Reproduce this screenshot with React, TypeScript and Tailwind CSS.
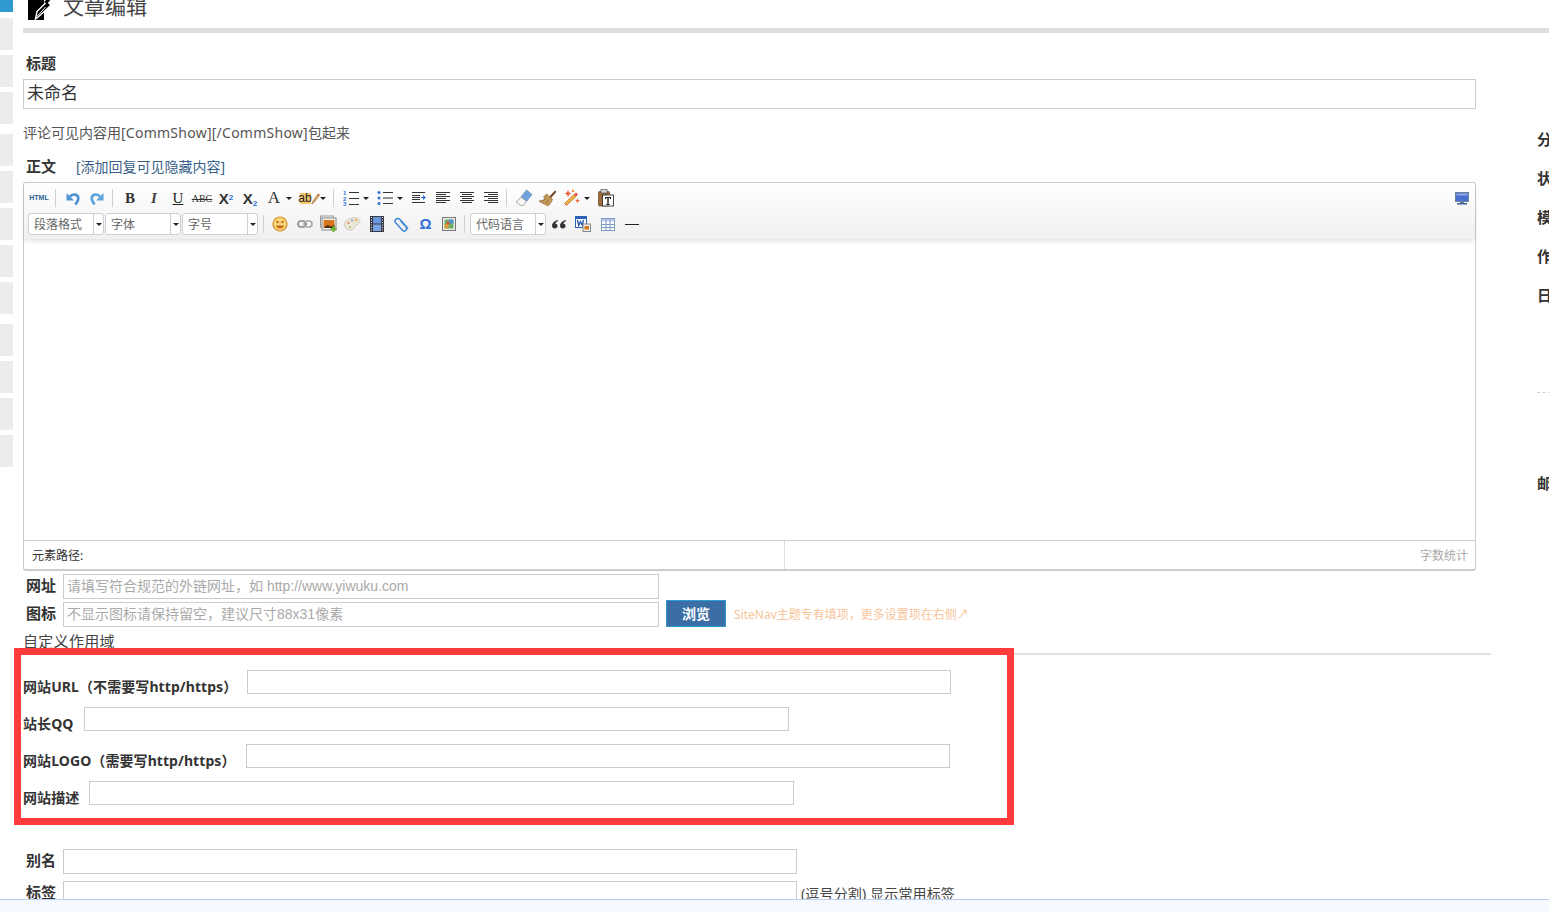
import React from 'react';

const sans = "font-['Noto_Sans','Noto_Sans_CJK_SC',sans-serif]";

const Arrow = ({ className = '' }: { className?: string }) => (
  <span className={`block w-0 h-0 border-x-[3px] border-t-[3px] border-x-transparent border-t-[#222] ${className}`} />
);

const Tool = ({ w = 'w-[24px]', children }: { w?: string; children: React.ReactNode }) => (
  <div className={`${w} h-full shrink-0 flex items-center justify-center`}>{children}</div>
);

const Sep = ({ w, pl }: { w: string; pl: string }) => (
  <div className={`${w} ${pl} shrink-0 h-full flex items-center`}>
    <div className="w-px h-[18px] bg-[#d0d0d0]" />
  </div>
);

const Drop = ({ w = 'w-[6px]', ml = '' }: { w?: string; ml?: string }) => (
  <div className={`${w} ${ml} shrink-0 flex justify-center`}>
    <Arrow />
  </div>
);

const Combo = ({ label, w, box }: { label: string; w: string; box: string }) => (
  <div className={`${w} shrink-0 h-[22px] flex bg-white border border-[#cfcfcf] rounded-[3px]`}>
    <div className={`${box} border-r border-[#cfcfcf] pl-[5px] text-[12px] leading-[22px] text-[#666]`}>{label}</div>
    <div className="flex-1 flex items-center justify-center">
      <Arrow />
    </div>
  </div>
);

const Lines = ({ rows }: { rows: [number, number][] }) => (
  <svg width="16" height="16" viewBox="0 0 16 16">
    {rows.map(([x, w], i) => (
      <rect key={i} x={x} y={2 + i * 2} width={w} height="1" fill="#333" />
    ))}
  </svg>
);

const UndoIcon = ({ flip }: { flip?: boolean }) => (
  <svg width="16" height="16" viewBox="0 0 16 16">
    <g transform={flip ? 'translate(16,0) scale(-1,1)' : undefined}>
      <path d="M5 6.500C8 3.500 13 4 13.300 8c.2 2.500-1.500 4.700-3 6.500" fill="none" stroke={flip ? '#5ba4dc' : '#4f93d2'} strokeWidth="2.600" />
      <path d="M1.500 3v7.500h7.500z" fill={flip ? '#5ba4dc' : '#4f93d2'} />
    </g>
  </svg>
);

const OlIcon = () => (
  <svg width="18" height="17" viewBox="0 0 18 17">
    <text x="1" y="5" fontSize="6" fontWeight="700" fill="#2f73d8" fontFamily="Liberation Sans">1</text>
    <text x="1" y="10.500" fontSize="6" fontWeight="700" fill="#2f73d8" fontFamily="Liberation Sans">2</text>
    <text x="1" y="16" fontSize="6" fontWeight="700" fill="#2f73d8" fontFamily="Liberation Sans">3</text>
    <rect x="7" y="2" width="10" height="1" fill="#333" />
    <rect x="7" y="8" width="10" height="1" fill="#333" />
    <rect x="7" y="14" width="10" height="1" fill="#333" />
  </svg>
);

const UlIcon = () => (
  <svg width="18" height="16" viewBox="0 0 18 16">
    <circle cx="3" cy="2.500" r="1.500" fill="#2f73d8" />
    <circle cx="3" cy="8" r="1.500" fill="#2f73d8" />
    <circle cx="3" cy="13.500" r="1.500" fill="#2f73d8" />
    <rect x="7" y="2" width="10" height="1" fill="#333" />
    <rect x="7" y="7.500" width="10" height="1" fill="#333" />
    <rect x="7" y="13" width="10" height="1" fill="#333" />
  </svg>
);

const IndentIcon = () => (
  <svg width="16" height="16" viewBox="0 0 16 16">
    <rect x="1" y="2" width="13" height="1" fill="#333" />
    <rect x="1" y="5" width="8" height="1" fill="#333" />
    <rect x="1" y="7" width="8" height="1" fill="#333" />
    <rect x="1" y="9" width="8" height="1" fill="#333" />
    <rect x="1" y="12" width="13" height="1" fill="#333" />
    <path d="M10 7h2V5l3 2.500-3 2.500V8h-2z" fill="#2f73d8" />
  </svg>
);

const EraserIcon = () => (
  <svg width="18" height="18" viewBox="0 0 18 18">
    <path d="M11.500 1l5.500 4.500-5.500 7-5.500-4.500z" fill="#6fa4dc" stroke="#6b8db5" strokeWidth=".8" />
    <path d="M6 8l5.500 4.500-3 4H5.500L1 13z" fill="#f6f6f6" stroke="#999" strokeWidth=".8" />
  </svg>
);

const BrushIcon = () => (
  <svg width="20" height="18" viewBox="0 0 20 18">
    <path d="M11 8l6-6.500 1.500 1.300L13 9z" fill="#6e4420" />
    <path d="M8.500 5l6 5.500c-1 2.500-2.500 4.500-4.500 6.500-1-1-6-2.500-9-5 3-.2 4.500-.8 6-2.500L5.500 8z" fill="#c79a5a" stroke="#8a5f2c" strokeWidth=".7" />
    <path d="M5 12l3.500-3M8 14l3-3.500" stroke="#8a5f2c" strokeWidth=".8" />
  </svg>
);

const MagicIcon = () => (
  <svg width="18" height="18" viewBox="0 0 18 18">
    <path d="M3.500 16.500l-2-2 9.500-9 2 2z" fill="#f2b04a" stroke="#b36b1c" strokeWidth=".7" />
    <path d="M11 5.500l2-2 2 2-2 2z" fill="#e0503a" />
    <path d="M5 1l1 2.600 2.500 1-2.500 1L5 8.200 4 5.600l-2.500-1 2.500-1z" fill="#ee5b2f" />
    <path d="M14.500 9.500l.7 1.600 1.600.7-1.600.7-.7 1.600-.7-1.600-1.600-.7 1.600-.7z" fill="#ee5b2f" />
    <circle cx="10" cy="2" r="1.200" fill="#f08a3c" />
  </svg>
);

const PasteIcon = () => (
  <svg width="16" height="18" viewBox="0 0 16 18">
    <rect x=".5" y="2.500" width="11" height="14.500" rx="1" fill="#9a6a3c" stroke="#6a4522" strokeWidth=".7" />
    <rect x="3" y=".5" width="6" height="3.500" fill="#d8d8d8" stroke="#555" strokeWidth=".7" />
    <rect x="4.500" y="6" width="11" height="11" fill="#fff" stroke="#333" strokeWidth=".9" />
    <path d="M7 8h6v2h-1V9h-1.300v6h1v1H8.300v-1h1V9H8v1H7z" fill="#222" />
  </svg>
);

const ScreenIcon = () => (
  <svg width="14" height="13" viewBox="0 0 14 13">
    <rect x=".5" y=".5" width="13" height="9" fill="#4a70d0" stroke="#6a809c" />
    <rect x="1.500" y="1.500" width="11" height="2" fill="#8fa8e8" />
    <rect x="5" y="10" width="4" height="1" fill="#6a809c" />
    <rect x="2" y="11" width="10" height="1.500" fill="#3f5f90" />
  </svg>
);

const SmileIcon = () => (
  <svg width="16" height="16" viewBox="0 0 16 16">
    <circle cx="8" cy="8" r="7" fill="#fbd77a" stroke="#d98a2b" strokeWidth="1.200" />
    <circle cx="5.500" cy="6" r="1.200" fill="#c9691c" />
    <circle cx="10.500" cy="6" r="1.200" fill="#c9691c" />
    <path d="M4 9.500h8c-.5 2-2 3-4 3s-3.500-1-4-3z" fill="#c9691c" />
  </svg>
);

const LinkIcon = () => (
  <svg width="16" height="10" viewBox="0 0 16 10">
    <rect x="1" y="2" width="8" height="6" rx="3" fill="none" stroke="#8a8a8a" strokeWidth="1.600" />
    <rect x="7" y="2" width="8" height="6" rx="3" fill="none" stroke="#a8a8a8" strokeWidth="1.600" />
  </svg>
);

const ImageIcon = () => (
  <svg width="18" height="18" viewBox="0 0 18 18">
    <rect x=".5" y="1" width="13" height="11" fill="#eee" stroke="#999" />
    <rect x="2" y="3" width="14" height="12" fill="#f4f4f4" stroke="#888" />
    <rect x="3.500" y="5" width="11" height="8" fill="#d9741c" />
    <path d="M3.500 13l4-3 3 1.500 4-1.500v3z" fill="#4a2a10" />
    <path d="M12.500 11h2v2h2v2h-2v2h-2v-2h-2v-2h2z" fill="#6ab82f" />
  </svg>
);

const PaletteIcon = () => (
  <svg width="18" height="16" viewBox="0 0 18 16">
    <path d="M9 2c4.500-1.500 8.500.5 8 3.500-.4 2.500-4 3-5 5-.8 1.800-2.500 4-5.500 3.500C3 13.500 1 11 1.500 8 2 5 5 3.200 9 2z" fill="#ece6d6" stroke="#bdb6a2" strokeWidth=".6" />
    <circle cx="13" cy="4" r="1.100" fill="#e0a040" />
    <circle cx="9" cy="4.500" r="1.100" fill="#7aa6d8" />
    <circle cx="5.500" cy="7" r="1.100" fill="#d87a6a" />
    <circle cx="7" cy="11" r="1" fill="#9ab86a" />
  </svg>
);

const FilmIcon = () => (
  <svg width="14" height="16" viewBox="0 0 14 16">
    <rect width="14" height="16" fill="#3a3a44" />
    <rect x="3" y="1" width="8" height="6.500" fill="#6a96dc" />
    <rect x="3" y="8.500" width="8" height="6.500" fill="#7aa4e4" />
    <path d="M1 1.500h1M1 4h1M1 6.500h1M1 9h1M1 11.500h1M1 14h1M12 1.500h1M12 4h1M12 6.500h1M12 9h1M12 11.500h1M12 14h1" stroke="#ddd" strokeWidth="1" />
  </svg>
);

const ClipIcon = () => (
  <svg width="16" height="16" viewBox="0 0 16 16">
    <path d="M14 12.500L6 3.500C4.800 2 2.800 2.200 1.800 3.200.8 4.200.8 6 2 7.200l6.500 7c1 1 2.600 1 3.500.1 1-1 .9-2.500 0-3.500L6.500 5" fill="none" stroke="#3f86d8" strokeWidth="1.500" />
  </svg>
);

const MapIcon = () => (
  <svg width="14" height="14" viewBox="0 0 14 14">
    <rect x=".5" y=".5" width="13" height="13" fill="#eee" stroke="#777" />
    <rect x="2.500" y="2.500" width="9" height="9" fill="#6fae5f" />
    <rect x="7" y="2.500" width="4.500" height="4" fill="#5b8fd8" />
    <rect x="2.500" y="7" width="4" height="4.500" fill="#d8a040" />
    <circle cx="6" cy="6" r="1.500" fill="#d8503a" />
  </svg>
);

const QuoteIcon = () => (
  <svg width="16" height="10" viewBox="0 0 16 10">
    <path d="M7 1C4 1.500 1 4 1 6.500 1 8.400 2.200 9.500 3.800 9.500S6.500 8.300 6.500 7c0-1.400-1-2.400-2.300-2.400C4.700 3.400 5.800 2.400 7 2z" fill="#333" />
    <path d="M15 1c-3 .5-6 3-6 5.500 0 1.900 1.200 3 2.800 3s2.700-1.200 2.700-2.500c0-1.400-1-2.400-2.300-2.400.5-1.200 1.600-2.200 2.800-2.600z" fill="#333" />
  </svg>
);

const WordIcon = () => (
  <svg width="16" height="16" viewBox="0 0 16 16">
    <rect x=".5" y=".5" width="11" height="11" fill="#fff" stroke="#2a62b8" />
    <rect x="1" y="1" width="10" height="2" fill="#2a62b8" />
    <path d="M2.500 4l1.200 5.500L5.500 5.500l1.800 4L8.500 4" fill="none" stroke="#1f55b0" strokeWidth="1.300" />
    <rect x="8" y="8" width="7.500" height="7.500" fill="#eee" stroke="#888" />
    <rect x="9.500" y="10" width="4.500" height="3.500" fill="#d9741c" />
  </svg>
);

const TableIcon = () => (
  <svg width="14" height="13" viewBox="0 0 14 13">
    <rect x=".5" y=".5" width="13" height="12" fill="#fff" stroke="#7f9cc8" />
    <rect x="1" y="1" width="12" height="2.500" fill="#b9cdea" />
    <path d="M1 6.500h12M1 9.500h12M5 1v11M9 1v11" stroke="#7f9cc8" strokeWidth="1" />
  </svg>
);

const PenTitleIcon = () => (
  <svg width="24" height="26" viewBox="0 0 24 26" className="shrink-0">
    <rect x="0" y="0" width="16" height="26" fill="#000" />
    <path d="M7.500 25l1.500-7.500L19 7.500l4 3.500L12.500 21z" fill="#000" stroke="#fff" strokeWidth="1.400" />
    <path d="M16 8l6-6 2 2-5 6z" fill="#000" />
    <path d="M9.500 22l8-9" stroke="#fff" strokeWidth="1" />
  </svg>
);

const FormInput = ({ w, h = 'h-[25px]', placeholder }: { w: string; h?: string; placeholder?: string }) => (
  <input
    placeholder={placeholder}
    className={`${w} ${h} shrink-0 bg-white border border-[#ccc] pl-[3px] pb-[2px] text-[14px] font-['Liberation_Sans','Noto_Sans_CJK_SC',sans-serif] placeholder:text-[#aaa] outline-none`}
  />
);

const Label = ({ children }: { children: React.ReactNode }) => (
  <div className="w-[40px] pl-[3px] shrink-0 text-[15px] leading-[23px] font-bold text-[#333]">{children}</div>
);

const customRows = [
  { label: '网站URL（不需要写http/https）', w: 'w-[224px]', input: 'w-[704px]' },
  { label: '站长QQ', w: 'w-[61px]', input: 'w-[705px]' },
  { label: '网站LOGO（需要写http/https）', w: 'w-[223px]', input: 'w-[704px]' },
  { label: '网站描述', w: 'w-[66px]', input: 'w-[705px]' },
];

const railGroups = [
  ['mt-[6px]', 'mt-[5px]', 'mt-[5px]'],
  ['mt-[10px]', 'mt-[5px]', 'mt-[5px]', 'mt-[5px]', 'mt-[5px]'],
  ['mt-[10px]', 'mt-[5px]', 'mt-[5px]', 'mt-[5px]'],
];

const sideLabels = ['分类', '状态', '模板', '作者', '日期'];

const Toolbar = () => (
  <div className="h-[56px] pt-[2px] bg-linear-to-b from-white to-[#f0f0f0] shadow-[0_2px_4px_rgba(0,0,0,0.12)] rounded-t-[3px] relative">
    <div className="h-[26px] flex items-center pl-[3px] pr-[1px]">
      <Tool>
        <span className="text-[7px] font-bold text-[#2a5f93] font-['Liberation_Sans',sans-serif]">HTML</span>
      </Tool>
      <Sep w="w-[10px]" pl="pl-[4px]" />
      <Tool><UndoIcon /></Tool>
      <Tool><UndoIcon flip /></Tool>
      <Sep w="w-[9px]" pl="pl-[3px]" />
      <Tool><span className="font-['Liberation_Serif',serif] font-bold text-[15px] text-[#333]">B</span></Tool>
      <Tool><span className="font-['Liberation_Serif',serif] italic font-bold text-[15px] text-[#444]">I</span></Tool>
      <Tool><span className="font-['Liberation_Serif',serif] underline text-[15px] text-[#222]">U</span></Tool>
      <Tool><span className="font-['Liberation_Serif',serif] line-through text-[10px] text-[#333]">ABC</span></Tool>
      <Tool>
        <span className="font-['Liberation_Sans',sans-serif] font-bold text-[15px] text-[#333] leading-none">X<sup className="text-[8px] text-[#2f73d8]">2</sup></span>
      </Tool>
      <Tool>
        <span className="font-['Liberation_Sans',sans-serif] font-bold text-[15px] text-[#333] leading-none">X<sub className="text-[8px] text-[#2f73d8]">2</sub></span>
      </Tool>
      <Tool><span className="font-['Liberation_Serif',serif] text-[17px] text-[#333]">A</span></Tool>
      <Drop />
      <Tool w="w-[24px] ml-[4px]">
        <span className="relative flex items-center justify-center bg-[#f6c46c] h-[11px] w-[11px] -ml-[6px] text-[12px] leading-none font-['Liberation_Sans',sans-serif] text-[#222]">
          ab
          <svg width="9" height="12" viewBox="0 0 9 12" className="absolute left-[11px] top-0">
            <path d="M1 11l1-3 5-7 1.500 1-5 7z" fill="#e8b35a" stroke="#8a5a2a" strokeWidth=".6" />
            <path d="M6.500 1.500L7.500.5l1 1-1 1z" fill="#e0503a" />
          </svg>
        </span>
      </Tool>
      <Drop />
      <Sep w="w-[13px]" pl="pl-[7px]" />
      <Tool><OlIcon /></Tool>
      <Drop />
      <Tool w="w-[24px] ml-[4px]"><UlIcon /></Tool>
      <Drop />
      <Tool w="w-[24px] ml-[4px]"><IndentIcon /></Tool>
      <Tool><Lines rows={[[1, 14], [1, 10], [1, 14], [1, 10], [1, 14], [1, 10]]} /></Tool>
      <Tool><Lines rows={[[1, 14], [3, 10], [1, 14], [3, 10], [1, 14], [3, 10]]} /></Tool>
      <Tool><Lines rows={[[1, 14], [5, 10], [1, 14], [5, 10], [1, 14], [5, 10]]} /></Tool>
      <Sep w="w-[9px]" pl="pl-[3px]" />
      <Tool><EraserIcon /></Tool>
      <Tool><BrushIcon /></Tool>
      <Tool><MagicIcon /></Tool>
      <Drop />
      <Tool w="w-[24px] ml-[4px]"><PasteIcon /></Tool>
      <div className="ml-auto h-full">
        <Tool><ScreenIcon /></Tool>
      </div>
    </div>
    <div className="h-[22px] mt-[2px] flex items-center pl-[4px]">
      <Combo label="段落格式" w="w-[76px]" box="w-[65px]" />
      <Combo label="字体" w="w-[76px] ml-[1px]" box="w-[65px]" />
      <Combo label="字号" w="w-[76px] ml-[1px]" box="w-[65px]" />
      <Sep w="w-[10px]" pl="pl-[5px]" />
      <Tool><SmileIcon /></Tool>
      <Tool w="w-[25px]"><LinkIcon /></Tool>
      <Tool w="w-[23px]"><ImageIcon /></Tool>
      <Tool><PaletteIcon /></Tool>
      <Tool w="w-[25px]"><FilmIcon /></Tool>
      <Tool w="w-[25px]"><ClipIcon /></Tool>
      <Tool w="w-[23px]">
        <span className="font-['Liberation_Sans',sans-serif] text-[15px] font-bold text-[#2f73d8]">Ω</span>
      </Tool>
      <Tool><MapIcon /></Tool>
      <Sep w="w-[9px]" pl="pl-[3px]" />
      <Combo label="代码语言" w="w-[76px]" box="w-[65px]" />
      <Tool w="w-[25px]"><QuoteIcon /></Tool>
      <Tool><WordIcon /></Tool>
      <Tool w="w-[25px]"><TableIcon /></Tool>
      <Tool><div className="w-[14px] h-[1px] bg-[#222]" /></Tool>
    </div>
  </div>
);

const Editor = () => (
  <div className="mt-[5px] w-[1453px] h-[389px] flex flex-col border border-[#ccc] border-b-2 rounded-[3px]">
    <Toolbar />
    <div className="flex-1 bg-white" />
    <div className="h-[29px] flex border-t border-[#ccc] text-[12px] leading-[30px]">
      <div className="w-[761px] pl-[8px] border-r border-[#ddd] text-[#333]">元素路径:</div>
      <div className="flex-1 text-right pr-[7px] text-[#aaa]">字数统计</div>
    </div>
  </div>
);

export default function App() {
  return (
    <div className={`relative w-full h-[912px] overflow-hidden bg-white flex text-[#333] ${sans}`}>
      <div className="w-[13px] shrink-0 flex flex-col">
        <div className="h-[12px] bg-[#2e9ad0]" />
        {railGroups.map((g, i) => g.map((m, j) => <div key={`${i}-${j}`} className={`h-[32px] bg-[#ececec] ${m}`} />))}
      </div>

      <div className="ml-[10px] flex-1 min-w-0 flex flex-col">
        <div className="h-[33px] border-b-[5px] border-[#dddddd] shrink-0">
          <div className="flex items-center -mt-[8px] h-[30px] pl-[5px]">
            <PenTitleIcon />
            <span className="ml-[11px] text-[21px] text-[#444]">文章编辑</span>
          </div>
        </div>

        <div className="flex">
          <div className="w-[1468px] shrink-0">
            <div className="mt-[20px] pl-[3px] text-[15px] leading-[20px] font-bold">标题</div>
            <input
              defaultValue="未命名"
              className="mt-[6px] block w-[1453px] h-[30px] border border-[#ccc] pl-[3px] pb-[5px] text-[17px] text-[#333] outline-none"
            />
            <div className="mt-[14px] text-[14px] leading-[20px] text-[#555]">
              评论可见内容用<span className="tracking-[0.25px]">[CommShow][/CommShow]</span>包起来
            </div>
            <div className="mt-[14px] h-[20px] flex items-center pl-[3px] -translate-y-px">
              <span className="w-[50px] text-[15px] font-bold">正文</span>
              <span className="text-[14px] text-[#3a5f88]">[添加回复可见隐藏内容]</span>
            </div>

            <Editor />

            <div className="mt-[3px] flex">
              <Label>网址</Label>
              <FormInput w="w-[596px]" placeholder="请填写符合规范的外链网址，如 http://www.yiwuku.com" />
            </div>
            <div className="mt-[3px] flex">
              <Label>图标</Label>
              <FormInput w="w-[596px]" placeholder="不显示图标请保持留空，建议尺寸88x31像素" />
              <button className="ml-[7px] -mt-[2px] w-[60px] h-[27px] bg-[#3a6ea5] border border-[#2e9cd6] text-white text-[14px] font-bold">
                浏览
              </button>
              <span className="ml-[8px] text-[12px] leading-[25px] text-[#f8c49a]">SiteNav主题专有填项，更多设置项在右侧↗</span>
            </div>

            <div className="h-[28px] border-b-2 border-[#e0e0e0] pt-[4px] text-[15px] leading-[20px] tracking-[0.3px] text-[#444]">自定义作用域</div>

            <div className="mt-[15px] flex flex-col gap-[13px]">
              {customRows.map((r) => (
                <div key={r.label} className="flex items-end">
                  <div className={`${r.w} shrink-0 whitespace-nowrap text-[14px] leading-[20px] font-bold tracking-[0.08px] text-[#333] -mb-[3px]`}>{r.label}</div>
                  <FormInput w={r.input} h="h-[24px]" />
                </div>
              ))}
            </div>

            <div className="mt-[44px] flex">
              <Label>别名</Label>
              <FormInput w="w-[734px]" />
            </div>
            <div className="mt-[7px] flex">
              <Label>标签</Label>
              <FormInput w="w-[734px]" />
              <span className="ml-[4px] text-[14px] leading-[25px] tracking-[0.15px] text-[#444] whitespace-nowrap">(逗号分割) 显示常用标签</span>
            </div>
          </div>

          <div className="ml-[46px] w-[60px] shrink-0 pt-[96px] text-[15px] leading-[20px] font-bold whitespace-nowrap">
            <div className="flex flex-col gap-[19px]">
              {sideLabels.map((s) => (
                <div key={s}>{s}</div>
              ))}
            </div>
            <div className="mt-[87px] w-[14px] border-t border-dashed border-[#ccc]" />
            <div className="mt-[80px]">邮箱</div>
          </div>
        </div>
      </div>

      <div className="absolute left-[14px] top-[648px] w-[1000px] h-[177px] border-[7px] border-[#ff3b3b] pointer-events-none" />
      <div className="absolute left-0 right-0 bottom-0 h-[13px] bg-[#f6f9ff] border-t border-[#b9cdf0]" />
    </div>
  );
}
